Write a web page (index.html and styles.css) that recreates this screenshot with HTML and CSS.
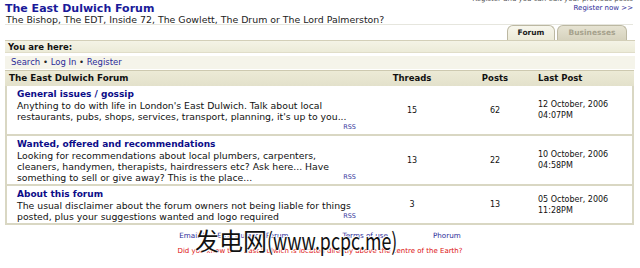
FILE: index.html
```html
<!DOCTYPE html>
<html lang="en">
<head>
<meta charset="utf-8">
<title>The East Dulwich Forum</title>
<link rel="stylesheet" href="styles.css">
</head>
<body>
<header class="top">
  <div class="brand">
    <h1 class="site-title">The East Dulwich Forum</h1>
    <div class="tagline">The Bishop, The EDT, Inside 72, The Gowlett, The Drum or The Lord Palmerston?</div>
  </div>
  <div class="account">
    <div class="account-note">Register and you can edit your previous posts</div>
    <a class="account-link" href="#">Register now &gt;&gt;</a>
  </div>
</header>
<nav class="tabs">
  <span class="tab tab-active">Forum</span>
  <span class="tab tab-off">Businesses</span>
</nav>
<div class="crumb">You are here:</div>
<div class="navbar"><a href="#">Search</a> &bull; <a href="#">Log In</a> &bull; <a href="#">Register</a></div>
<section class="forum-table">
  <div class="forum-head">
    <div class="col-forum">The East Dulwich Forum</div>
    <div class="col-threads">Threads</div>
    <div class="col-posts">Posts</div>
    <div class="col-last">Last Post</div>
  </div>
  <div class="forum-row">
    <div class="col-forum">
      <a class="forum-name" href="#">General issues / gossip</a>
      <div class="forum-desc">Anything to do with life in London's East Dulwich. Talk about local restaurants, pubs, shops, services, transport, planning, it's up to you...<a class="rss" href="#">RSS</a></div>
    </div>
    <div class="col-threads">15</div>
    <div class="col-posts">62</div>
    <div class="col-last">12 October, 2006<br>04:07PM</div>
  </div>
  <div class="forum-row">
    <div class="col-forum">
      <a class="forum-name" href="#">Wanted, offered and recommendations</a>
      <div class="forum-desc">Looking for recommendations about local plumbers, carpenters, cleaners, handymen, therapists, hairdressers etc? Ask here... Have something to sell or give away? This is the place...<a class="rss" href="#">RSS</a></div>
    </div>
    <div class="col-threads">13</div>
    <div class="col-posts">22</div>
    <div class="col-last">10 October, 2006<br>04:58PM</div>
  </div>
  <div class="forum-row">
    <div class="col-forum">
      <a class="forum-name" href="#">About this forum</a>
      <div class="forum-desc">The usual disclaimer about the forum owners not being liable for things posted, plus your suggestions wanted and logo required<a class="rss" href="#">RSS</a></div>
    </div>
    <div class="col-threads">3</div>
    <div class="col-posts">13</div>
    <div class="col-last">05 October, 2006<br>11:28PM</div>
  </div>
</section>
<footer class="foot">
  <div class="foot-links">
    <a class="foot-email" href="#">Email The East Dulwich Forum</a>
    <a class="foot-terms" href="#">Terms of use</a>
    <a href="#">Phorum</a>
  </div>
  <div class="foot-note">Did you know that East Dulwich is located directly above the centre of the Earth?</div>
</footer>
<div class="watermark">发电网<span class="watermark-latin">(www.pcpc.me)</span></div>
</body>
</html>
```
FILE: styles.css
```css
html, body {
  margin: 0;
  padding: 0;
  background: #ffffff;
}
body {
  width: 640px;
  height: 268px;
  overflow: hidden;
  position: relative;
  font-family: "DejaVu Sans", Verdana, sans-serif;
  font-size: 8.5px;
  color: #111;
}
a { text-decoration: none; }

.top {
  display: flex;
  justify-content: space-between;
  margin: 0 7px 0 5px;
  height: 24px;
  border-bottom: 1px solid #e6e6de;
}
.site-title {
  margin: 0;
  padding-top: 3px;
  font-size: 11px;
  line-height: 12px;
  font-weight: bold;
  color: #1a1a99;
}
.tagline {
  font-size: 9.4px;
  line-height: 10px;
  color: #222;
  padding-left: 1px;
}
.account {
  margin-top: -5px;
  text-align: right;
  font-size: 7px;
  line-height: 9px;
}
.account-note { color: #555; }
.account-link { color: #2b2b99; }

.tabs {
  display: flex;
  justify-content: flex-end;
  gap: 2px;
  margin-top: -1px;
  padding-right: 13px;
  height: 16px;
  align-items: flex-end;
}
.tab {
  height: 15px;
  box-sizing: border-box;
  border: 1px solid #bcb8a2;
  border-bottom: none;
  border-radius: 6px 6px 0 0;
  font-weight: bold;
  font-size: 7.5px;
  line-height: 14px;
  text-align: center;
}
.tab-active {
  width: 48px;
  background: linear-gradient(#f7f6ec, #ecead8);
  color: #222;
}
.tab-off {
  width: 70px;
  background: linear-gradient(#e6e3d2, #d6d2bd);
  color: #a5a18c;
}

.crumb {
  margin: 0 5px;
  height: 13px;
  box-sizing: border-box;
  background: linear-gradient(#f4f3e6, #ecebd8);
  border-top: 1px solid #d3cfb8;
  border-bottom: 1px solid #e0ddc8;
  font-weight: bold;
  line-height: 12px;
  padding-left: 3px;
}
.navbar {
  margin: 3px 5px 0;
  height: 13px;
  box-sizing: border-box;
  background: #f5f4ea;
  line-height: 13px;
  padding-left: 6px;
  color: #222;
}
.navbar a { color: #2b2b99; }

.forum-table {
  margin: 1px 6px 0 5px;
  border: 2px solid #d9d7c3;
  border-top: none;
}
.forum-head,
.forum-row {
  display: grid;
  grid-template-columns: 363px 84px 82px 1fr;
}
.forum-head {
  margin: 0 -2px;
  padding: 0 2px;
  height: 16px;
  box-sizing: border-box;
  background: linear-gradient(#ecead6, #e3e1cb);
  border-top: 1px solid #cdc9b0;
  font-weight: bold;
  line-height: 15px;
}
.forum-head .col-forum {
  font-size: 8.8px;
  padding-left: 2px;
}
.forum-row {
  align-items: center;
  border-top: 2px solid #d9d7c3;
  line-height: 11px;
}
.forum-head + .forum-row { border-top: none; }
.forum-row .col-forum {
  padding: 3px 14px 1px 10px;
}
.forum-name {
  display: block;
  font-weight: bold;
  font-size: 9px;
  color: #0c0c88;
}
.forum-desc {
  font-size: 9.3px;
  color: #111;
}
.rss {
  float: right;
  margin-left: 3px;
  font-size: 6.5px;
  color: #3a3aa0;
}
.forum-row .col-threads,
.forum-row .col-posts,
.forum-row .col-last {
  font-size: 8px;
}
.col-threads,
.col-posts {
  text-align: center;
}
.col-last {
  padding-left: 2px;
}

.foot {
  margin-top: 6px;
  text-align: center;
}
.foot-links {
  display: flex;
  justify-content: center;
  font-size: 7.2px;
  line-height: 10px;
}
.foot-email { margin-right: 54px; }
.foot-terms { margin-right: 45px; }
.foot-links a { color: #2b2b99; }
.foot-note {
  margin-top: 6px;
  font-size: 7px;
  line-height: 9px;
  color: #dd1111;
}

.watermark {
  position: absolute;
  left: 195px;
  top: 224px;
  font-family: "Noto Sans CJK SC", "DejaVu Sans", sans-serif;
  font-size: 24px;
  line-height: 32px;
  color: #111;
  text-shadow: 0 0 2px #fff, 0 0 2px #fff, 1px 1px 0 #fff, -1px -1px 0 #fff;
  white-space: nowrap;
}
.watermark-latin {
  display: inline-block;
  transform: scaleX(0.74);
  transform-origin: left center;
}
```
